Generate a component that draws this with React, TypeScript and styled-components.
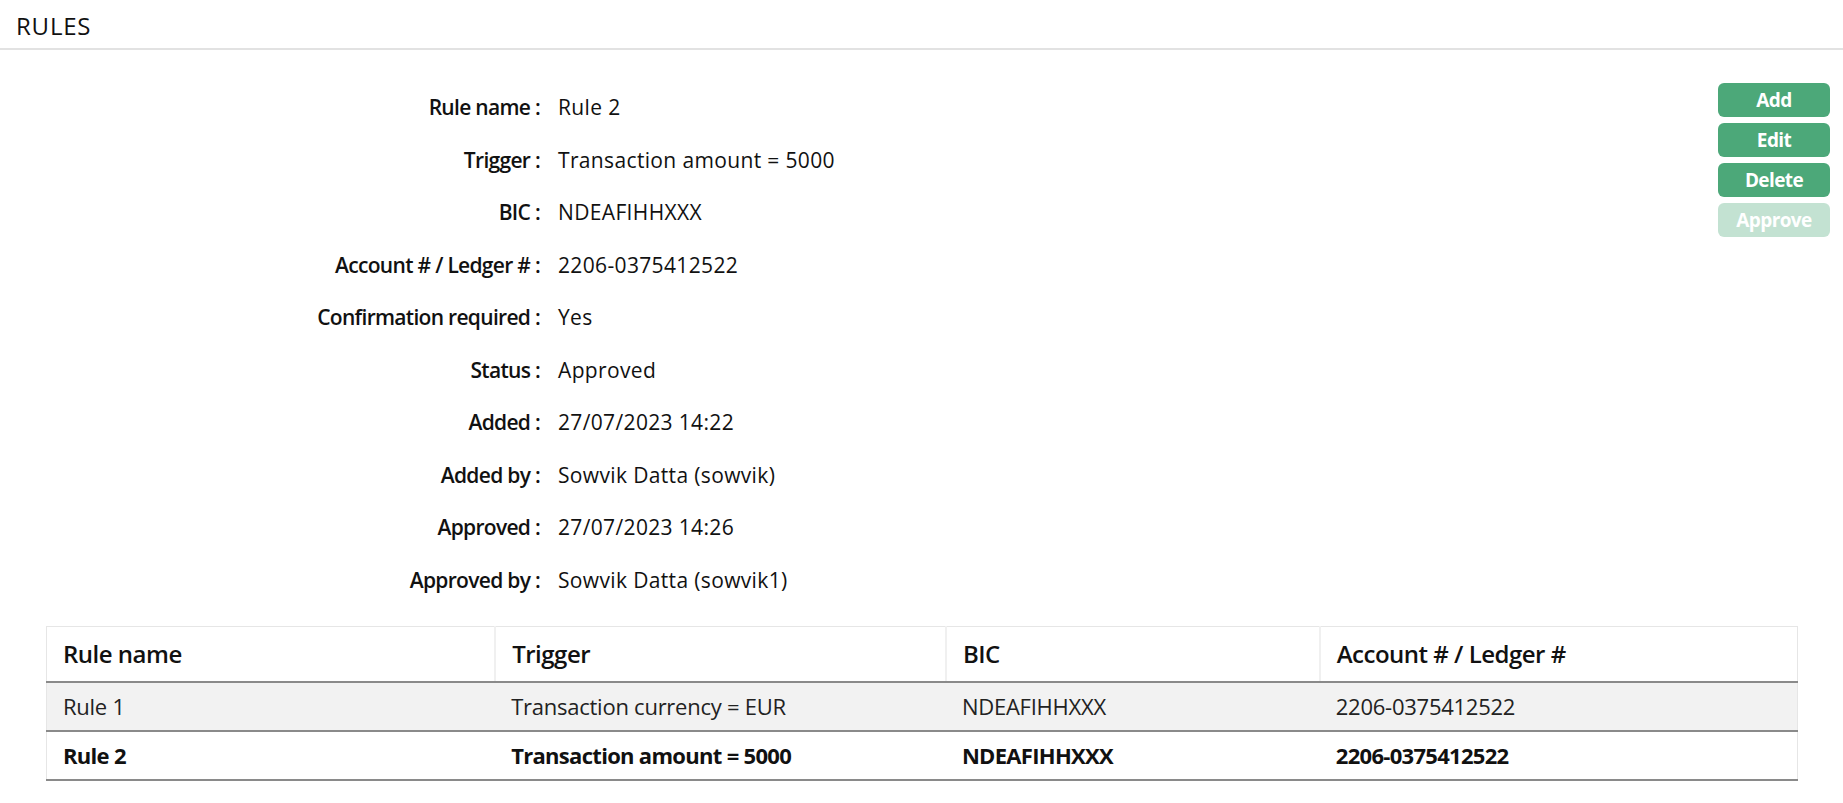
import React from "react";
import styled, { createGlobalStyle } from "styled-components";

const Global = createGlobalStyle`
  html, body { margin: 0; padding: 0; background: #fff; }
  body { font-family: "Open Sans", "Noto Sans", sans-serif; color: #111; }
  * { box-sizing: border-box; }
`;

const Page = styled.div`
  width: 1843px;
  min-height: 803px;
  display: flex;
  flex-direction: column;
`;

const TopBar = styled.header`
  height: 50px;
  border-bottom: 2px solid #e2e2e2;
  display: flex;
  align-items: center;
  padding: 2px 0 0 16px;
  font-size: 24px;
  font-weight: 400;
  letter-spacing: 0.8px;
`;

const Body = styled.main`
  display: flex;
  flex-direction: column;
  padding: 0 45px 0 46px;
`;

const Upper = styled.section`
  display: flex;
  justify-content: space-between;
  align-items: flex-start;
  padding-top: 31px;
`;

const Details = styled.dl`
  margin: 0;
  display: grid;
  grid-template-columns: 494px auto;
  column-gap: 18px;
  grid-auto-rows: 52.5px;
  align-items: center;
`;

const Label = styled.dt`
  text-align: right;
  font-weight: 600;
  font-size: 21px;
  letter-spacing: -0.7px;
`;

const Value = styled.dd`
  margin: 0;
  font-size: 21px;
  letter-spacing: 0.35px;
`;

const Actions = styled.div`
  display: flex;
  flex-direction: column;
  gap: 6px;
  width: 112px;
  margin-top: 2px;
  margin-right: -32px;
`;

const ActionButton = styled.button<{ $disabled?: boolean }>`
  height: 34px;
  border: none;
  border-radius: 6px;
  background: ${(p) => (p.$disabled ? "#c3e2d2" : "#4ca879")};
  color: #fff;
  font-family: "Open Sans", sans-serif;
  font-weight: 700;
  font-size: 19px;
  letter-spacing: -0.6px;
  cursor: ${(p) => (p.$disabled ? "default" : "pointer")};
  padding: 0;
`;

const Table = styled.table`
  margin-top: 20px;
  width: 1752px;
  border-collapse: collapse;
  border: 1px solid #e6e6e6;
  border-bottom: none;
`;

const HeadCell = styled.th<{ $w: number }>`
  width: ${(p) => p.$w}px;
  height: 55px;
  text-align: left;
  padding: 0 16px;
  font-size: 24px;
  font-weight: 600;
  letter-spacing: -0.5px;
  border-left: 2px solid #f0f0f0;
  border-bottom: 2px solid #8a8a8a;
  &:first-child { border-left: none; }
`;

const Row = styled.tr<{ $active?: boolean }>`
  background: ${(p) => (p.$active ? "#fff" : "#f2f2f2")};
  font-weight: ${(p) => (p.$active ? 700 : 400)};
  color: ${(p) => (p.$active ? "#111" : "#222")};
  letter-spacing: ${(p) => (p.$active ? "-0.7px" : "-0.25px")};
  height: 49px;
  border-bottom: 2px solid #8a8a8a;
`;

const Cell = styled.td`
  padding: 0 16px;
  font-size: 22px;
`;

const details: [string, string][] = [
  ["Rule name", "Rule 2"],
  ["Trigger", "Transaction amount = 5000"],
  ["BIC", "NDEAFIHHXXX"],
  ["Account # / Ledger #", "2206-0375412522"],
  ["Confirmation required", "Yes"],
  ["Status", "Approved"],
  ["Added", "27/07/2023 14:22"],
  ["Added by", "Sowvik Datta (sowvik)"],
  ["Approved", "27/07/2023 14:26"],
  ["Approved by", "Sowvik Datta (sowvik1)"],
];

const rows = [
  { name: "Rule 1", trigger: "Transaction currency = EUR", bic: "NDEAFIHHXXX", acc: "2206-0375412522", active: false },
  { name: "Rule 2", trigger: "Transaction amount = 5000", bic: "NDEAFIHHXXX", acc: "2206-0375412522", active: true },
];

export default function App() {
  return (
    <Page>
      <Global />
      <TopBar>RULES</TopBar>
      <Body>
        <Upper>
          <Details>
            {details.map(([l, v]) => (
              <React.Fragment key={l}>
                <Label>{l} :</Label>
                <Value>{v}</Value>
              </React.Fragment>
            ))}
          </Details>
          <Actions>
            <ActionButton>Add</ActionButton>
            <ActionButton>Edit</ActionButton>
            <ActionButton>Delete</ActionButton>
            <ActionButton $disabled>Approve</ActionButton>
          </Actions>
        </Upper>
        <Table>
          <thead>
            <tr>
              <HeadCell $w={449}>Rule name</HeadCell>
              <HeadCell $w={451}>Trigger</HeadCell>
              <HeadCell $w={374}>BIC</HeadCell>
              <HeadCell $w={478}>Account # / Ledger #</HeadCell>
            </tr>
          </thead>
          <tbody>
            {rows.map((r) => (
              <Row key={r.name} $active={r.active}>
                <Cell>{r.name}</Cell>
                <Cell>{r.trigger}</Cell>
                <Cell>{r.bic}</Cell>
                <Cell>{r.acc}</Cell>
              </Row>
            ))}
          </tbody>
        </Table>
      </Body>
    </Page>
  );
}
